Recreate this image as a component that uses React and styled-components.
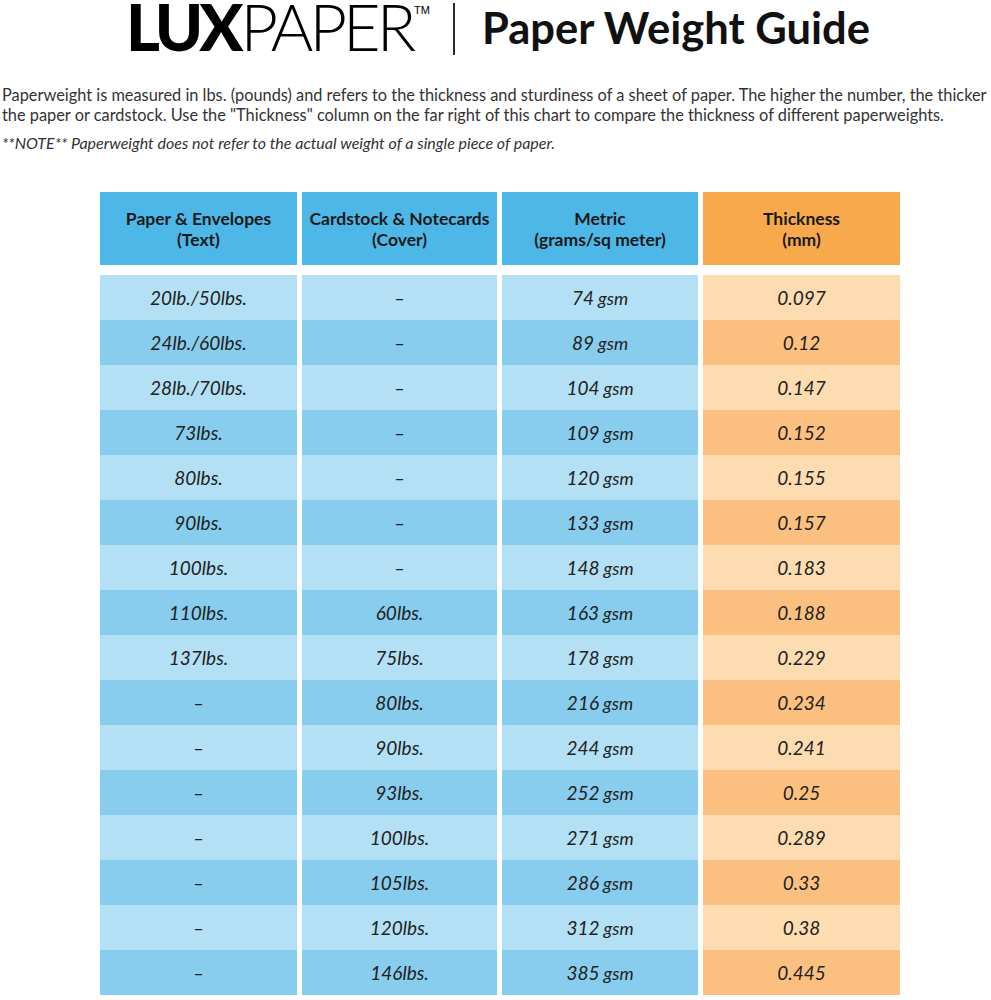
import React from "react";
import styled, { createGlobalStyle } from "styled-components";

const Global = createGlobalStyle`
  html, body { margin: 0; padding: 0; background: #fff; }
  body { font-family: Lato, "Open Sans", sans-serif; color: #222; width: 991px; }
`;

const Page = styled.div`
  width: 991px;
  display: flex;
  flex-direction: column;
`;

const Header = styled.header`
  display: flex;
  align-items: flex-start;
  height: 60px;
  padding-left: 126px;
`;

const Logo = styled.div`
  display: flex;
  align-items: flex-start;
  line-height: 1;
  color: #000;
`;

const LogoBold = styled.span`
  font-family: Lato, sans-serif;
  font-weight: 900;
  font-size: 65px;
  line-height: 65px;
  letter-spacing: -4px;
  margin-top: -6px;
`;

const LogoThin = styled.span`
  font-family: Lato, sans-serif;
  font-weight: 300;
  font-size: 65px;
  line-height: 65px;
  letter-spacing: -4px;
  margin-top: -6px;
  margin-left: 1px;
`;

const TM = styled.span`
  font-family: "Liberation Sans", sans-serif;
  font-size: 11px;
  line-height: 11px;
  margin-top: 5px;
  margin-left: 2px;
`;

const Divider = styled.div`
  width: 2px;
  height: 52px;
  background: #2a2a2a;
  margin: 3px 27px 0 23px;
`;

const Title = styled.h1`
  margin: 6px 0 0 0;
  font-family: Lato, sans-serif;
  font-weight: 700;
  font-size: 43.5px;
  line-height: 43px;
  color: #111;
`;

const Intro = styled.p`
  margin: 25px 0 0 2px;
  font-size: 16.35px;
  line-height: 20px;
  color: #333;
`;

const Note = styled.p`
  margin: 8px 0 0 2px;
  font-size: 16px;
  line-height: 20px;
  font-style: italic;
  color: #333;
`;

const Table = styled.div`
  margin: 39px 0 0 100px;
  display: grid;
  grid-template-columns: 197px 195px 196px 197px;
  column-gap: 5px;
`;

const HeadCell = styled.div`
  height: 73px;
  margin-bottom: 10px;
  display: flex;
  align-items: center;
  justify-content: center;
  text-align: center;
  font-weight: 700;
  font-size: 17.5px;
  line-height: 21px;
  color: #1a1a1a;
  background: ${(p) => (p.$orange ? "#f7a94b" : "#4db7e7")};
`;

const Cell = styled.div`
  height: 45px;
  display: flex;
  align-items: center;
  justify-content: center;
  font-style: italic;
  font-size: 19px;
  color: #222;
  background: ${(p) =>
    p.$orange
      ? p.$dark
        ? "#fbc07f"
        : "#fcdcb0"
      : p.$dark
      ? "#88cdee"
      : "#b4e0f5"};
`;

const Gsm = styled.span`
  font-size: 18px;
  margin-left: 4px;
`;

const rows = [
  ["20lb./50lbs.", "–", "74", "0.097"],
  ["24lb./60lbs.", "–", "89", "0.12"],
  ["28lb./70lbs.", "–", "104", "0.147"],
  ["73lbs.", "–", "109", "0.152"],
  ["80lbs.", "–", "120", "0.155"],
  ["90lbs.", "–", "133", "0.157"],
  ["100lbs.", "–", "148", "0.183"],
  ["110lbs.", "60lbs.", "163", "0.188"],
  ["137lbs.", "75lbs.", "178", "0.229"],
  ["–", "80lbs.", "216", "0.234"],
  ["–", "90lbs.", "244", "0.241"],
  ["–", "93lbs.", "252", "0.25"],
  ["–", "100lbs.", "271", "0.289"],
  ["–", "105lbs.", "286", "0.33"],
  ["–", "120lbs.", "312", "0.38"],
  ["–", "146lbs.", "385", "0.445"],
];

export default function App() {
  return (
    <Page>
      <Global />
      <Header>
        <Logo>
          <LogoBold>LUX</LogoBold>
          <LogoThin>PAPER</LogoThin>
          <TM>TM</TM>
        </Logo>
        <Divider />
        <Title>Paper Weight Guide</Title>
      </Header>
      <Intro>
        Paperweight is measured in lbs. (pounds) and refers to the thickness and
        sturdiness of a sheet of paper. The higher the number, the thicker the
        paper or cardstock. Use the "Thickness" column on the far right of this
        chart to compare the thickness of different paperweights.
      </Intro>
      <Note>
        **NOTE** Paperweight does not refer to the actual weight of a single
        piece of paper.
      </Note>
      <Table>
        <HeadCell>
          Paper &amp; Envelopes
          <br />
          (Text)
        </HeadCell>
        <HeadCell>
          Cardstock &amp; Notecards
          <br />
          (Cover)
        </HeadCell>
        <HeadCell>
          Metric
          <br />
          (grams/sq meter)
        </HeadCell>
        <HeadCell $orange>
          Thickness
          <br />
          (mm)
        </HeadCell>
        {rows.map((r, i) => {
          const dark = i % 2 === 1;
          return (
            <React.Fragment key={i}>
              <Cell $dark={dark}>{r[0]}</Cell>
              <Cell $dark={dark}>{r[1]}</Cell>
              <Cell $dark={dark}>
                {r[2]}
                <Gsm>gsm</Gsm>
              </Cell>
              <Cell $dark={dark} $orange>
                {r[3]}
              </Cell>
            </React.Fragment>
          );
        })}
      </Table>
    </Page>
  );
}
